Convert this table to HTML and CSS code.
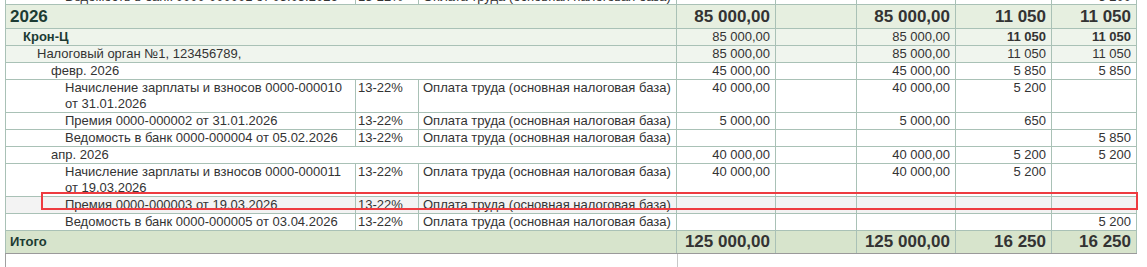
FILE: index.html
```html
<!DOCTYPE html>
<html lang="ru">
<head>
<meta charset="utf-8">
<link rel="stylesheet" href="styles.css">
</head>
<body>
<div class="view">
  <table class="report">
    <colgroup>
      <col class="c1"><col class="c2"><col class="c3"><col class="c4"><col class="c5"><col class="c6"><col class="c7"><col class="c8">
    </colgroup>
    <tbody>
      <tr class="doc partial">
        <td class="l5">Ведомость в банк 0000-000001 от 05.03.2026</td><td class="rate">13-22%</td><td class="kind">Оплата труда (основная налоговая база)</td>
        <td class="num"></td><td class="num"></td><td class="num"></td><td class="num"></td><td class="num">5 200</td>
      </tr>
      <tr class="g-year">
        <td colspan="3" class="l1">2026</td>
        <td class="num nol">85 000,00</td><td class="num"></td><td class="num">85 000,00</td><td class="num">11 050</td><td class="num">11 050</td>
      </tr>
      <tr class="g-org">
        <td colspan="3" class="l2">Крон-Ц</td>
        <td class="num nol">85 000,00</td><td class="num"></td><td class="num">85 000,00</td><td class="num b">11 050</td><td class="num b">11 050</td>
      </tr>
      <tr class="g-tax">
        <td colspan="3" class="l3">Налоговый орган №1, 123456789,</td>
        <td class="num nol">85 000,00</td><td class="num"></td><td class="num">85 000,00</td><td class="num">11 050</td><td class="num">11 050</td>
      </tr>
      <tr class="g-month">
        <td colspan="3" class="l4">февр. 2026</td>
        <td class="num nol">45 000,00</td><td class="num"></td><td class="num">45 000,00</td><td class="num">5 850</td><td class="num">5 850</td>
      </tr>
      <tr class="doc">
        <td class="l5">Начисление зарплаты и взносов 0000-000010 от 31.01.2026</td><td class="rate">13-22%</td><td class="kind">Оплата труда (основная налоговая база)</td>
        <td class="num">40 000,00</td><td class="num"></td><td class="num">40 000,00</td><td class="num">5 200</td><td class="num"></td>
      </tr>
      <tr class="doc">
        <td class="l5">Премия 0000-000002 от 31.01.2026</td><td class="rate">13-22%</td><td class="kind">Оплата труда (основная налоговая база)</td>
        <td class="num">5 000,00</td><td class="num"></td><td class="num">5 000,00</td><td class="num">650</td><td class="num"></td>
      </tr>
      <tr class="doc">
        <td class="l5">Ведомость в банк 0000-000004 от 05.02.2026</td><td class="rate">13-22%</td><td class="kind">Оплата труда (основная налоговая база)</td>
        <td class="num"></td><td class="num"></td><td class="num"></td><td class="num"></td><td class="num">5 850</td>
      </tr>
      <tr class="g-month">
        <td colspan="3" class="l4">апр. 2026</td>
        <td class="num">40 000,00</td><td class="num"></td><td class="num">40 000,00</td><td class="num">5 200</td><td class="num">5 200</td>
      </tr>
      <tr class="doc">
        <td class="l5">Начисление зарплаты и взносов 0000-000011 от 19.03.2026</td><td class="rate">13-22%</td><td class="kind">Оплата труда (основная налоговая база)</td>
        <td class="num">40 000,00</td><td class="num"></td><td class="num">40 000,00</td><td class="num">5 200</td><td class="num"></td>
      </tr>
      <tr class="doc selected">
        <td class="l5">Премия 0000-000003 от 19.03.2026</td><td class="rate">13-22%</td><td class="kind">Оплата труда (основная налоговая база)</td>
        <td class="num"></td><td class="num"></td><td class="num"></td><td class="num"></td><td class="num"></td>
      </tr>
      <tr class="doc">
        <td class="l5">Ведомость в банк 0000-000005 от 03.04.2026</td><td class="rate">13-22%</td><td class="kind">Оплата труда (основная налоговая база)</td>
        <td class="num"></td><td class="num"></td><td class="num"></td><td class="num"></td><td class="num">5 200</td>
      </tr>
      <tr class="total">
        <td colspan="3" class="l1">Итого</td>
        <td class="num">125 000,00</td><td class="num"></td><td class="num">125 000,00</td><td class="num">16 250</td><td class="num">16 250</td>
      </tr>
    </tbody>
  </table>
  <div class="filler"><div class="fill-left"></div><div class="fill-right"></div></div>
  <div class="highlight"></div>
</div>
</body>
</html>
```

FILE: styles.css
```css
html, body {
  margin: 0;
  padding: 0;
  background: #fff;
}

body {
  font-family: "Liberation Sans", Arial, sans-serif;
  font-size: 13px;
  color: #333;
}

.view {
  position: relative;
  width: 1147px;
  height: 267px;
  overflow: hidden;
  padding-left: 5px;
  box-sizing: border-box;
}

.report {
  border-collapse: collapse;
  table-layout: fixed;
  width: 1132px;
  margin-top: -13px;
  border-left: 1px solid #a9c1b6;
}

.c1 { width: 350px; }
.c2 { width: 63px; }
.c3 { width: 258px; }
.c4 { width: 99px; }
.c5 { width: 81px; }
.c6 { width: 99px; }
.c7 { width: 96px; }
.c8 { width: 85px; }

.report td {
  border: 1px solid #a9c1b6;
  padding: 0 4px 0 3px;
  line-height: 16px;
  vertical-align: top;
  white-space: nowrap;
  overflow: hidden;
}

.report td.l5 { white-space: normal; padding-left: 59px; }
.report td.rate { padding-left: 2px; }
.report td.kind { padding-left: 4px; }

.report td.num {
  text-align: right;
  padding-right: 5px;
}

.report td.nol { border-left-color: transparent; }

.partial td {
  line-height: 14px;
  padding-top: 2px;
}

.l1 { padding-left: 4px !important; }
.l2 { padding-left: 17px !important; }
.l3 { padding-left: 31px !important; }
.l4 { padding-left: 45px !important; }

.g-year td {
  background: #e6efe0;
  font-weight: bold;
  font-size: 17px;
  line-height: 23px;
}
.g-year td.l1 { color: #1c3b33; }

.g-org td { background: #eef4eb; }
.g-org td.l2 { font-weight: bold; color: #1c3b33; }
.report td.b { font-weight: bold; }

.g-tax td { background: #f0f5ee; }

.selected td { background: #f3f3f3; }

.total td {
  background: #d7e4cc;
  font-weight: bold;
  font-size: 17px;
  line-height: 22px;
  border-bottom-color: #9a9a9a;
}
.total td.l1 {
  font-size: 13px;
  color: #1c3b33;
}

.filler {
  display: flex;
  height: 40px;
}
.fill-left {
  width: 671px;
  border-left: 1px solid #a0a0a0;
}
.fill-right {
  flex: 1;
  border-left: 1px solid #c8c8c8;
}

.highlight {
  position: absolute;
  left: 41px;
  top: 192px;
  width: 1093px;
  height: 14px;
  border: 2px solid #ee3b40;
}
```
